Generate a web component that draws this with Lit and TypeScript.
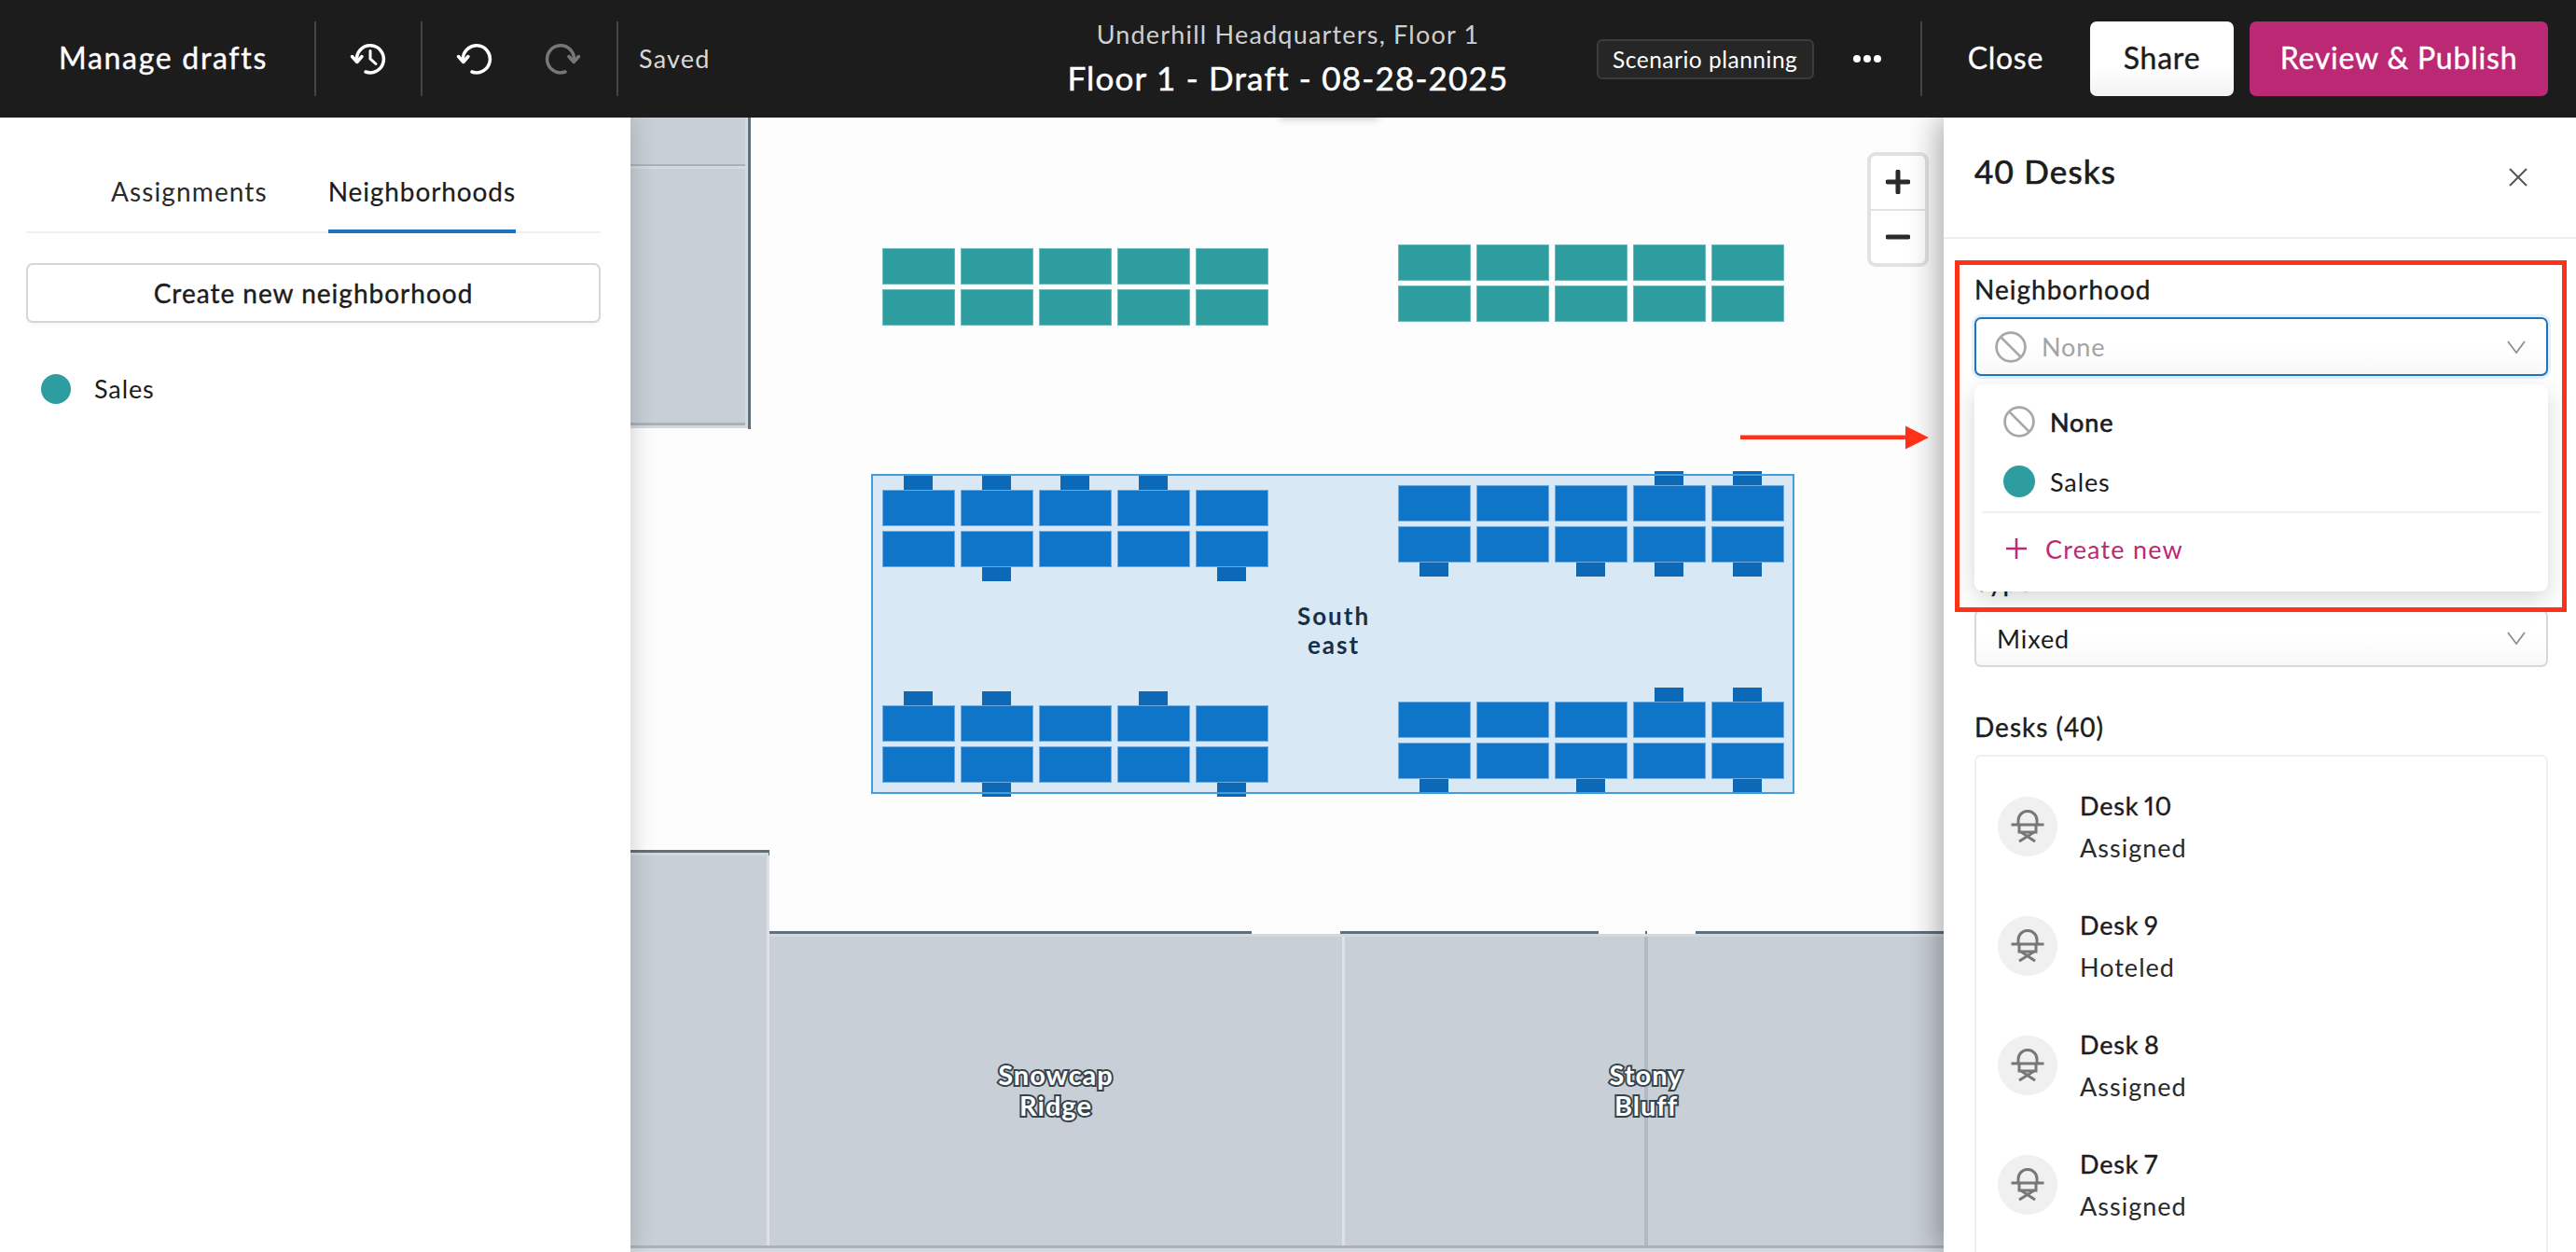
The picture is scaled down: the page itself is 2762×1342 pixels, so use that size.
import { LitElement, html, css } from "lit";
import { customElement } from "lit/decorators.js";

const MX = 676, MY = 126;
type R = [number, number, number, number, string];
const box = (x: number, y: number, w: number, h: number) =>
  `left:${x - MX}px;top:${y - MY}px;width:${w}px;height:${h}px`;

const LIGHT = "#d4d9de", ROOM = "#c8cfd6", SHADE = "#a9b2ba", WALL = "#5f707d";
const rects: R[] = [
  [676, 126, 126, 333, LIGHT],
  [676, 126, 123, 327, ROOM],
  [676, 176, 123, 2, SHADE],
  [676, 178, 126, 3, LIGHT],
  [676, 453, 123, 3, SHADE],
  [802, 126, 3, 334, WALL],
  [676, 911, 149, 431, ROOM],
  [676, 911, 149, 3, WALL],
  [676, 914, 149, 3, LIGHT],
  [824, 911, 1, 90, WALL],
  [825, 1001, 1259, 341, ROOM],
  [825, 998, 517, 3, WALL],
  [1437, 998, 277, 3, WALL],
  [1818, 998, 266, 3, WALL],
  [1764, 998, 2, 4, WALL],
  [825, 1001, 1259, 3, LIGHT],
  [1439, 1004, 3, 332, "#dfe2e5"],
  [1763, 1004, 4, 332, "#b2bac2"],
  [822, 917, 3, 419, "#dfe2e5"],
  [676, 1335, 1408, 3, SHADE],
  [676, 1338, 1408, 4, LIGHT],
];

interface Group { x: number; y: number; top: number[]; bottom: number[]; }
const blueGroups: Group[] = [
  { x: 946, y: 525, top: [0, 1, 2, 3], bottom: [1, 4] },
  { x: 1499, y: 520, top: [3, 4], bottom: [0, 2, 3, 4] },
  { x: 946, y: 756, top: [0, 1, 3], bottom: [1, 4] },
  { x: 1499, y: 752, top: [3, 4], bottom: [0, 2, 4] },
];
const tealGroups: Group[] = [
  { x: 946, y: 266, top: [], bottom: [] },
  { x: 1499, y: 262, top: [], bottom: [] },
];
const cols = [0, 1, 2, 3, 4];
const STEP = 84, DW = 77.5, DH = 39, ROWGAP = 44;

@customElement("app-root")
export class AppRoot extends LitElement {
  static styles = css`
    :host {
      display: flex; flex-direction: column; width: 2762px; height: 1342px; overflow: hidden; position: relative;
      font-family: "Lato", "Liberation Sans", sans-serif; color: #1c1c1c; background: #fff;
      --magenta: #bb2974;
    }
    * { box-sizing: border-box; }
    svg { display: block; fill: none; }
    .top {
      flex: none; height: 126px; background: #1c1c1c; color: #fff; display: grid;
      grid-template-columns: 1fr auto 1fr; align-items: center; position: relative; z-index: 5;
    }
    .left, .right { display: flex; align-items: center; height: 80px; }
    .right { justify-content: flex-end; padding-right: 30px; }
    .vr { flex: none; width: 2px; height: 80px; background: #444; }
    .manage { width: 337px; padding: 0 0 3px 63px; font-size: 32px; letter-spacing: 1.7px; -webkit-text-stroke: .4px #fff; }
    .hist { width: 112px; display: flex; justify-content: center; }
    .undo { width: 208px; display: flex; gap: 54px; padding-left: 36px; }
    .ic { width: 40px; height: 40px; stroke: #fff; stroke-width: 3.5; stroke-linecap: round; }
    .ic.off { stroke: #777; }
    .saved { margin-left: 22px; padding-bottom: 2px; font-size: 27px; color: #d8d8d8; letter-spacing: 1.2px; }
    .titles { text-align: center; margin-top: -2px; }
    .t1 { font-size: 27px; line-height: 32px; color: #cfcfcf; letter-spacing: 1.2px; margin-bottom: 10px; }
    .t2 { font-size: 35px; line-height: 40px; letter-spacing: 1.2px; -webkit-text-stroke: .5px #fff; }
    .badge {
      width: 233px; height: 43px; border: 2px solid #3c3c3c; border-radius: 6px; background: #262626; font-size: 24.5px;
      display: flex; align-items: center; justify-content: center; letter-spacing: .5px; margin-right: 42px;
    }
    .dots { display: flex; gap: 3px; margin-right: 42px; }
    .dots i { width: 8px; height: 8px; border-radius: 50%; background: #fff; }
    .close { font-size: 32px; letter-spacing: .7px; margin: 0 50px 0 49px; padding-bottom: 3px; -webkit-text-stroke: .3px #fff; }
    .btn {
      height: 80px; border-radius: 7px; display: flex; align-items: center; justify-content: center; font-size: 32px;
      letter-spacing: .8px; padding-bottom: 3px; -webkit-text-stroke: .4px currentColor;
    }
    .share { width: 154px; background: linear-gradient(#fff 60%, #f3f3f3); color: #1c1c1c; margin-right: 17px; }
    .publish { width: 320px; background: var(--magenta); color: #fff; }

    .main { flex: 1; display: flex; min-height: 0; }
    .lp { flex: none; width: 676px; padding: 0 32px 0 28px; background: #fff; position: relative; z-index: 2; box-shadow: 2px 0 24px rgba(0,0,0,.18); }
    .tabs { display: flex; justify-content: center; gap: 65px; padding-top: 61px; border-bottom: 2px solid #f0f0f0; }
    .tab { font-size: 28px; line-height: 36px; padding-bottom: 23px; margin-bottom: -2px; border-bottom: 4px solid transparent; letter-spacing: 1.1px; color: #2a2a2a; }
    .tab.on { border-color: #1f72bd; color: #1c1c1c; letter-spacing: .9px; -webkit-text-stroke: .2px #1c1c1c; }
    .create {
      margin-top: 32px; height: 64px; border: 2px solid #d6d6d6; border-radius: 7px; display: flex; align-items: center; justify-content: center;
      font-size: 28px; letter-spacing: 1px; -webkit-text-stroke: .4px #1c1c1c; box-shadow: 0 3px 3px rgba(0,0,0,.03);
    }
    .sales { margin-top: 54px; padding-left: 16px; display: flex; align-items: center; gap: 25px; font-size: 27px; letter-spacing: .9px; }
    .dot { flex: none; width: 32px; height: 32px; border-radius: 50%; background: #2d9da0; }

    .map { flex: 1; position: relative; overflow: hidden; background: #fdfdfd; }
    .map > div { position: absolute; }
    .zone { background: #d8e9f5; }
    .zoneb { border: 2px solid #449dd6; }
    .desk { border: 1px solid #6fa9dd; background: #0f75c9; }
    .chair { background: #0c69b8; }
    .teal { background: #2d9da0; border: 1px solid rgba(255,255,255,.3); }
    .zlabel { font-size: 26px; line-height: 31px; font-weight: 700; text-align: center; color: #17304a; letter-spacing: 2px; }
    .rlabel {
      font-size: 29px; line-height: 33px; font-weight: 700; text-align: center; color: #fff; letter-spacing: 1px;
      -webkit-text-stroke: 4px #36444e; paint-order: stroke fill;
    }
    .tabshadow { background: #fff; box-shadow: 0 1px 8px rgba(0,0,0,.25); }
    .zoom { border: 4px solid #e2e2e2; border-radius: 9px; background: #fff; display: flex; flex-direction: column; }
    .zoom span { flex: 1; display: flex; align-items: center; justify-content: center; }
    .zoom span + span { border-top: 2px solid #e2e2e2; }
    .zoom svg { width: 26px; height: 26px; stroke: #2a2a2a; stroke-width: 5; stroke-linecap: round; }

    .rp { flex: none; width: 678px; background: #fff; position: relative; z-index: 2; box-shadow: -6px 0 30px rgba(0,0,0,.33); overflow: hidden; }
    .rh { height: 130px; padding: 37px 0 0 33px; border-bottom: 2px solid #eee; display: flex; justify-content: space-between; }
    .rh h2 { margin: 0; font-size: 35px; line-height: 40px; font-weight: 400; letter-spacing: 1.2px; -webkit-text-stroke: .7px #1c1c1c; }
    .rh svg { width: 20px; height: 20px; margin: 17px 52px 0 0; stroke: #555; stroke-width: 2; }
    .rb { padding: 36px 30px 0 33px; }
    .label { font-size: 28px; line-height: 36px; margin-bottom: 12px; letter-spacing: 1px; -webkit-text-stroke: .4px #1c1c1c; }
    .field { position: relative; }
    .select {
      height: 62px; border: 2px solid #d8d8d8; border-radius: 7px; display: flex; align-items: center; padding: 0 22px 0 22px; font-size: 27px; letter-spacing: .9px;
      background: linear-gradient(#fff 50%, #f8f8f8);
    }
    .select.open { height: 63px; border-color: #1f72bd; box-shadow: 0 0 0 3px #e3f0fa; color: #a3a3a3; gap: 16px; padding-left: 20px; }
    .select .chev { width: 20px; height: 14px; margin-left: auto; stroke: #8f8f8f; stroke-width: 1.8; }
    .no { flex: none; width: 34px; height: 34px; stroke: #a8a8a8; stroke-width: 2.6; }
    .menu {
      position: absolute; left: 0; right: 0; top: 120px; height: 222px; border-radius: 9px; background: #fff; z-index: 1;
      box-shadow: 0 8px 26px rgba(0,0,0,.16); padding: 8px;
    }
    .opt { height: 64px; padding-left: 23px; display: flex; align-items: center; gap: 16px; font-size: 27px; letter-spacing: .9px; }
    .opt .dot { width: 34px; height: 34px; }
    .opt.sel { -webkit-text-stroke: .7px #1c1c1c; }
    .menu hr { border: 0; height: 2px; background: #f0f0f0; margin: 0; }
    .new { height: 76px; padding-left: 25px; display: flex; align-items: center; gap: 19px; color: var(--magenta); font-size: 27px; letter-spacing: 1.2px; }
    .new svg { width: 24px; height: 24px; stroke: var(--magenta); stroke-width: 2.5; }
    .typef { margin-top: 202px; }
    .deskh { margin-top: 46px; }
    .list { border: 2px solid #f0f0f0; border-radius: 7px; padding: 11px 0 40px 23px; }
    .item { height: 128px; display: flex; align-items: center; gap: 24px; }
    .av { flex: none; width: 64px; height: 64px; border-radius: 50%; background: #f0f0f0; display: flex; align-items: center; justify-content: center; }
    .av svg { width: 36px; height: 36px; stroke: #777; stroke-width: 3; }
    .nm { font-size: 27px; line-height: 34px; margin-bottom: 11px; letter-spacing: .8px; word-spacing: -2px; font-variant-numeric: proportional-nums; -webkit-text-stroke: .4px #1c1c1c; }
    .st { font-size: 27px; line-height: 34px; letter-spacing: 1px; color: #2a2a2a; }

    .redbox { position: absolute; left: 2096px; top: 279px; width: 656px; height: 377px; border: 5px solid #ff3219; z-index: 6; pointer-events: none; }
    .arrow { position: absolute; left: 1866px; top: 455px; width: 204px; height: 28px; z-index: 6; }
  `;

  private noIcon() {
    return html`<svg class="no" viewBox="0 0 32 32"><circle cx="16" cy="16" r="14.5"/><path d="M6 6 26 26"/></svg>`;
  }
  private chev() {
    return html`<svg class="chev" viewBox="0 0 20 14"><path d="M1 1 10 13 19 1"/></svg>`;
  }
  private chair() {
    return html`<svg viewBox="0 0 36 36"><path d="M8 16V11.5a10 10 0 0 1 20 0V16"/><path d="M.5 16H35.5"/><path d="M9 16V24H27V16"/><path d="M11 24 26 34M25 24 9 34"/></svg>`;
  }

  private renderGroup(g: Group, cls: string) {
    return [0, 1].map((r) =>
      cols.map((c) => html`<div class=${cls} style=${box(g.x + c * STEP, g.y + r * ROWGAP, DW, DH)}></div>`)
    );
  }
  private renderChairs(g: Group) {
    return html`${g.top.map((c) => html`<div class="chair" style=${box(g.x + c * STEP + 23, g.y - 15, 31, 15)}></div>`)}
    ${g.bottom.map((c) => html`<div class="chair" style=${box(g.x + c * STEP + 23, g.y + ROWGAP + DH, 31, 15)}></div>`)}`;
  }

  render() {
    const desks = [["Desk 10", "Assigned"], ["Desk 9", "Hoteled"], ["Desk 8", "Assigned"], ["Desk 7", "Assigned"]];
    return html`
      <header class="top">
        <div class="left">
          <div class="manage">Manage drafts</div>
          <div class="vr"></div>
          <div class="hist">
            <svg class="ic" viewBox="0 0 40 40"><path d="M7.5 22A14.5 14.5 0 1 1 17 34"/><path d="M2.5 17.5 7.8 23.5 13 17.5" stroke-linejoin="round"/><path d="M22 11.5V20L28 25.5" stroke-width="3"/></svg>
          </div>
          <div class="vr"></div>
          <div class="undo">
            <svg class="ic" viewBox="0 0 40 40"><path d="M7.5 22A14.5 14.5 0 1 1 17 34"/><path d="M2.5 17.5 7.8 23.5 13 17.5" stroke-linejoin="round"/></svg>
            <svg class="ic off" viewBox="0 0 40 40"><path d="M32.5 22A14.5 14.5 0 1 0 23 34"/><path d="M37.5 17.5 32.2 23.5 27 17.5" stroke-linejoin="round"/></svg>
          </div>
          <div class="vr"></div>
          <div class="saved">Saved</div>
        </div>
        <div class="titles">
          <div class="t1">Underhill Headquarters, Floor 1</div>
          <div class="t2">Floor 1 - Draft - 08-28-2025</div>
        </div>
        <div class="right">
          <div class="badge">Scenario planning</div>
          <div class="dots"><i></i><i></i><i></i></div>
          <div class="vr"></div>
          <div class="close">Close</div>
          <div class="btn share">Share</div>
          <div class="btn publish">Review &amp; Publish</div>
        </div>
      </header>
      <div class="main">
        <aside class="lp">
          <div class="tabs">
            <div class="tab">Assignments</div>
            <div class="tab on">Neighborhoods</div>
          </div>
          <div class="create">Create new neighborhood</div>
          <div class="sales"><span class="dot"></span>Sales</div>
        </aside>
        <section class="map">
          ${rects.map(([x, y, w, h, c]) => html`<div style="${box(x, y, w, h)};background:${c}"></div>`)}
          <div class="tabshadow" style=${box(1372, 116, 106, 10)}></div>
          ${tealGroups.map((g) => this.renderGroup(g, "teal"))}
          <div class="zone" style=${box(934, 508, 990, 343)}></div>
          ${blueGroups.map((g) => this.renderChairs(g))}
          ${blueGroups.map((g) => this.renderGroup(g, "desk"))}
          <div class="zoneb" style=${box(934, 508, 990, 343)}></div>
          <div class="zlabel" style=${box(1370, 645, 120, 64)}>South<br />east</div>
          <div class="rlabel" style=${box(1032, 1135, 200, 66)}>Snowcap<br />Ridge</div>
          <div class="rlabel" style=${box(1665, 1135, 200, 66)}>Stony<br />Bluff</div>
          <div class="zoom" style=${box(2002, 163, 66, 123)}>
            <span><svg viewBox="0 0 26 26"><path d="M13 2V24M2 13H24"/></svg></span>
            <span><svg viewBox="0 0 26 26"><path d="M2 13H24"/></svg></span>
          </div>
        </section>
        <aside class="rp">
          <div class="rh">
            <h2>40 Desks</h2>
            <svg viewBox="0 0 20 20"><path d="M1 1 19 19M19 1 1 19"/></svg>
          </div>
          <div class="rb">
            <div class="field">
              <div class="label">Neighborhood</div>
              <div class="select open">${this.noIcon()}None${this.chev()}</div>
              <div class="menu">
                <div class="opt sel">${this.noIcon()}None</div>
                <div class="opt"><span class="dot"></span>Sales</div>
                <hr />
                <div class="new"><svg viewBox="0 0 24 24"><path d="M12 1V23M1 12H23"/></svg>Create new</div>
              </div>
            </div>
            <div class="field typef">
              <div class="label">Type</div>
              <div class="select">Mixed${this.chev()}</div>
            </div>
            <div class="label deskh">Desks (40)</div>
            <div class="list">
              ${desks.map(([n, s]) => html`<div class="item"><div class="av">${this.chair()}</div><div><div class="nm">${n}</div><div class="st">${s}</div></div></div>`)}
            </div>
          </div>
        </aside>
      </div>
      <div class="redbox"></div>
      <svg class="arrow" viewBox="0 0 204 28"><path d="M0 11.5H178V16H0z" fill="#ff3219"/><path d="M177 1.5 202 14 177 26.5z" fill="#ff3219"/></svg>
    `;
  }
}
